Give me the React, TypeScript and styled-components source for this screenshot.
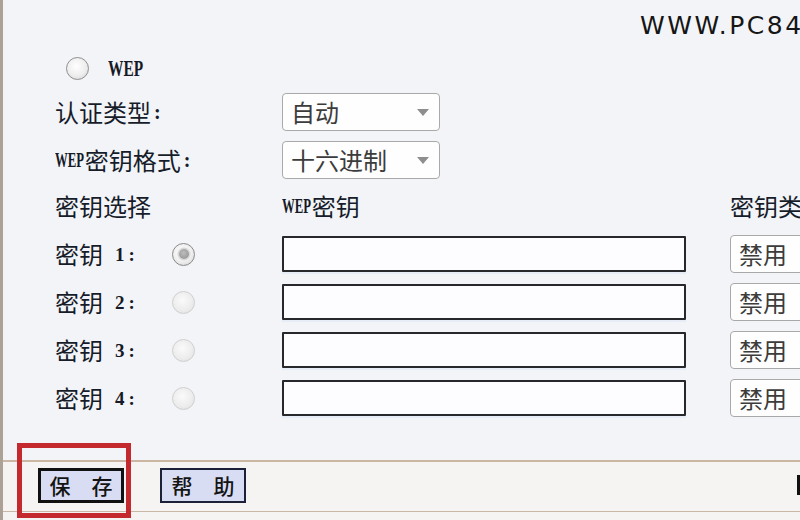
import React from "react";
import styled, { createGlobalStyle } from "styled-components";

const GlobalStyle = createGlobalStyle`
  html, body { margin: 0; padding: 0; background: #f3f4f8; }
  * { box-sizing: border-box; }
`;

const Page = styled.div`
  position: relative;
  width: 800px;
  height: 520px;
  overflow: hidden;
  background: #f3f4f8;
  border-left: 3px solid #aca196;
  display: flex;
  flex-direction: column;
  font-family: "Noto Sans CJK SC", "Noto Sans", sans-serif;
  color: #161c2a;
`;

const Header = styled.div`
  height: 50px;
  padding-left: 637px;
  display: flex;
  align-items: center;
  white-space: nowrap;
`;

const Watermark = styled.span`
  font-family: "DejaVu Sans", sans-serif;
  font-size: 25px;
  letter-spacing: 2.5px;
  color: #161616;
  line-height: 1;
`;

const Form = styled.div`
  padding-left: 52px;
  display: flex;
  flex-direction: column;
`;

const WepRow = styled.div`
  display: flex;
  align-items: center;
  gap: 19px;
  height: 24px;
  margin-top: 6px;
  padding-left: 11px;
`;

/* Narrow bold serif Latin, like the SimSun half-width letters of the router page */
const Latin = styled.span<{ $size: number; $scale: number; $width: number }>`
  display: inline-block;
  font-family: "Liberation Serif", serif;
  font-weight: 700;
  font-size: ${(p) => p.$size}px;
  line-height: 1;
  transform: scaleX(${(p) => p.$scale});
  transform-origin: left center;
  margin-right: ${(p) => -(p.$width * (1 - p.$scale))}px;
  color: #151a26;
`;

const Digits = styled.span`
  font-family: "Liberation Serif", serif;
  font-weight: 700;
  font-size: 19px;
  letter-spacing: 4px;
  line-height: 1;
  color: #151a26;
`;

const Radio = styled.span<{ $state: "normal" | "checked" | "disabled" }>`
  position: relative;
  display: inline-block;
  flex: none;
  width: 23px;
  height: 23px;
  border-radius: 50%;
  border: 1.5px solid
    ${(p) => (p.$state === "disabled" ? "#cfcfcf" : p.$state === "checked" ? "#8a8a8a" : "#8f8f8f")};
  background: ${(p) =>
    p.$state === "disabled"
      ? "radial-gradient(circle at 45% 40%, #fafafa 0%, #ececec 60%, #dcdcdc 100%)"
      : "radial-gradient(circle at 45% 40%, #ffffff 0%, #eeeeee 55%, #cfcfcf 100%)"};
  &::after {
    content: "";
    display: ${(p) => (p.$state === "checked" ? "block" : "none")};
    position: absolute;
    left: 50%;
    top: 50%;
    width: 10px;
    height: 10px;
    margin: -5px 0 0 -5px;
    border-radius: 50%;
    background: radial-gradient(circle at 45% 40%, #bdbdbd 0%, #8c8c8c 100%);
    box-shadow: 0 0 0 1.5px #d8d8d8;
  }
`;

const Row = styled.div<{ $top: number; $h: number }>`
  display: grid;
  grid-template-columns: 227px 448px 1fr;
  align-items: center;
  height: ${(p) => p.$h}px;
  margin-top: ${(p) => p.$top}px;
`;

const Label = styled.span`
  font-size: 24px;
  font-weight: 400;
  line-height: 1;
  white-space: nowrap;
  display: flex;
  align-items: center;
`;

const Colon = styled.span`
  font-family: "Liberation Serif", serif;
  font-weight: 700;
  font-size: 20px;
  margin-left: 3px;
`;

const KeyLabelCell = styled.div`
  display: flex;
  align-items: center;
`;

const KeyLabel = styled.span`
  width: 117px;
  display: flex;
  align-items: center;
  gap: 12px;
  font-size: 24px;
  font-weight: 400;
  line-height: 1;
  white-space: nowrap;
`;

const Select = styled.div<{ $w: number }>`
  width: ${(p) => p.$w}px;
  flex: none;
  height: 38px;
  border: 1px solid #a9a9a9;
  border-radius: 4px;
  background: #fefefe;
  display: flex;
  align-items: center;
  justify-content: space-between;
  padding: 0 10px 0 8px;
  font-size: 24px;
  color: #3c3c3c;
  line-height: 1;
  white-space: nowrap;
`;

const Arrow = styled.span`
  width: 0;
  height: 0;
  border-left: 6px solid transparent;
  border-right: 6px solid transparent;
  border-top: 7px solid #8e8e8e;
`;

const TextInput = styled.div`
  width: 404px;
  height: 36px;
  border: 2px solid #26282c;
  border-radius: 1px;
  background: #fdfdff;
  box-shadow: 0 2px 0 #e7edf7;
`;

const Footer = styled.div`
  margin-top: auto;
  height: 60px;
  border-top: 2px solid #cbb6a3;
  background: #f6f4f2;
  display: flex;
  flex-direction: column;
`;

const FooterBar = styled.div`
  height: 50px;
  border-bottom: 1px solid #c9b7a6;
  display: flex;
  align-items: center;
  padding: 0 0 3px 35px;
  gap: 36px;
`;

const Button = styled.div<{ $strong?: boolean }>`
  width: 86px;
  height: 35px;
  border: ${(p) => (p.$strong ? "3px solid #111111" : "2px solid #1b2238")};
  background: #d9ddf3;
  display: flex;
  align-items: center;
  justify-content: center;
  gap: 21px;
  font-size: 21px;
  font-weight: 500;
  line-height: 1;
  color: #141414;
`;

const EdgeMark = styled.span`
  margin-left: auto;
  width: 3px;
  height: 20px;
  background: #111;
`;

const Annotation = styled.div`
  position: absolute;
  left: 14px;
  top: 443px;
  width: 114px;
  height: 75px;
  border: 5px solid #c3292d;
  pointer-events: none;
`;

const keys = [1, 2, 3, 4];

export default function App() {
  return (
    <>
      <GlobalStyle />
      <Page>
        <Header>
          <Watermark>WWW.PC841</Watermark>
        </Header>
        <Form>
          <WepRow>
            <Radio $state="normal" />
            <Latin $size={23} $scale={0.67} $width={51}>WEP</Latin>
          </WepRow>
          <Row $top={13} $h={38}>
            <Label>
              认证类型<Colon>:</Colon>
            </Label>
            <Select $w={158}>
              <span>自动</span>
              <Arrow />
            </Select>
          </Row>
          <Row $top={10} $h={38}>
            <Label>
              <Latin $size={22} $scale={0.58} $width={48.8}>WEP</Latin>
              密钥格式<Colon>:</Colon>
            </Label>
            <Select $w={158}>
              <span>十六进制</span>
              <Arrow />
            </Select>
          </Row>
          <Row $top={12} $h={30}>
            <Label>密钥选择</Label>
            <Label>
              <Latin $size={22} $scale={0.58} $width={48.8}>WEP</Latin>
              密钥
            </Label>
            <Label>密钥类型</Label>
          </Row>
          {keys.map((k, i) => (
            <Row key={k} $top={i === 0 ? 14 : 10} $h={38}>
              <KeyLabelCell>
                <KeyLabel>
                  密钥
                  <Digits>{k}:</Digits>
                </KeyLabel>
                <Radio $state={k === 1 ? "checked" : "disabled"} />
              </KeyLabelCell>
              <TextInput />
              <Select $w={120}>
                <span>禁用</span>
                <Arrow />
              </Select>
            </Row>
          ))}
        </Form>
        <Footer>
          <FooterBar>
            <Button $strong>
              <span>保</span>
              <span>存</span>
            </Button>
            <Button>
              <span>帮</span>
              <span>助</span>
            </Button>
            <EdgeMark />
          </FooterBar>
        </Footer>
        <Annotation />
      </Page>
    </>
  );
}
